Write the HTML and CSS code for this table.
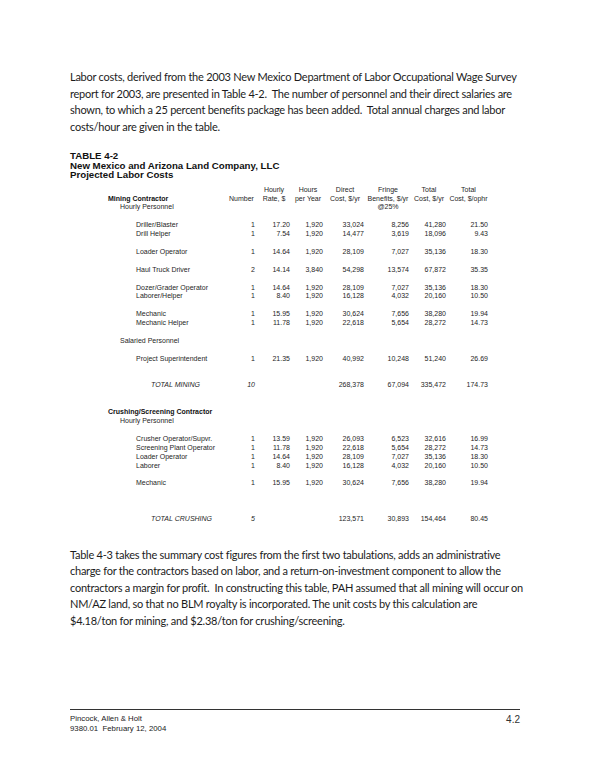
FILE: index.html
```html
<!DOCTYPE html>
<html lang="en">
<head>
    <meta charset="UTF-8">
    <meta name="viewport" content="width=device-width, initial-scale=1.0">
    <title>Projected Labor Costs</title>
    <link rel="stylesheet" href="styles.css">
</head>
<body>

    <div class="page">
        <p class="text">
            Labor costs, derived from the 2003 New Mexico Department of Labor Occupational Wage Survey<br>
            report for 2003, are presented in Table 4-2.&nbsp; The number of personnel and their direct salaries are<br>
            shown, to which a 25 percent benefits package has been added.&nbsp; Total annual charges and labor<br>
            costs/hour are given in the table.
        </p>

        <div class="table-title">
            TABLE 4-2<br>
            New Mexico and Arizona Land Company, LLC<br>
            Projected Labor Costs
        </div>

        <table class="labor">
            <colgroup>
                <col class="c-name">
                <col class="c-num">
                <col class="c-rate">
                <col class="c-hours">
                <col class="c-direct">
                <col class="c-fringe">
                <col class="c-total">
                <col class="c-ophr">
            </colgroup>
            <thead>
                <tr>
                    <th></th><th></th>
                    <th>Hourly</th><th>Hours</th><th>Direct</th><th>Fringe</th><th>Total</th><th>Total</th>
                </tr>
                <tr>
                    <th class="group">Mining Contractor</th>
                    <th>Number</th><th>Rate, $</th><th>per Year</th><th>Cost, $/yr</th><th>Benefits, $/yr</th><th>Cost, $/yr</th><th>Cost, $/ophr</th>
                </tr>
                <tr>
                    <th class="sub">Hourly Personnel</th>
                    <th></th><th></th><th></th><th></th><th>@25%</th><th></th><th></th>
                </tr>
            </thead>
            <tbody>
                <tr class="gap"><td colspan="8"></td></tr>
                <tr><td class="job">Driller/Blaster</td><td>1</td><td>17.20</td><td>1,920</td><td>33,024</td><td>8,256</td><td>41,280</td><td>21.50</td></tr>
                <tr><td class="job">Drill Helper</td><td>1</td><td>7.54</td><td>1,920</td><td>14,477</td><td>3,619</td><td>18,096</td><td>9.43</td></tr>
                <tr class="gap"><td colspan="8"></td></tr>
                <tr><td class="job">Loader Operator</td><td>1</td><td>14.64</td><td>1,920</td><td>28,109</td><td>7,027</td><td>35,136</td><td>18.30</td></tr>
                <tr class="gap"><td colspan="8"></td></tr>
                <tr><td class="job">Haul Truck Driver</td><td>2</td><td>14.14</td><td>3,840</td><td>54,298</td><td>13,574</td><td>67,872</td><td>35.35</td></tr>
                <tr class="gap"><td colspan="8"></td></tr>
                <tr><td class="job">Dozer/Grader Operator</td><td>1</td><td>14.64</td><td>1,920</td><td>28,109</td><td>7,027</td><td>35,136</td><td>18.30</td></tr>
                <tr><td class="job">Laborer/Helper</td><td>1</td><td>8.40</td><td>1,920</td><td>16,128</td><td>4,032</td><td>20,160</td><td>10.50</td></tr>
                <tr class="gap"><td colspan="8"></td></tr>
                <tr><td class="job">Mechanic</td><td>1</td><td>15.95</td><td>1,920</td><td>30,624</td><td>7,656</td><td>38,280</td><td>19.94</td></tr>
                <tr><td class="job">Mechanic Helper</td><td>1</td><td>11.78</td><td>1,920</td><td>22,618</td><td>5,654</td><td>28,272</td><td>14.73</td></tr>
                <tr class="gap"><td colspan="8"></td></tr>
                <tr><td class="sub" colspan="8">Salaried Personnel</td></tr>
                <tr class="gap"><td colspan="8"></td></tr>
                <tr><td class="job">Project Superintendent</td><td>1</td><td>21.35</td><td>1,920</td><td>40,992</td><td>10,248</td><td>51,240</td><td>26.69</td></tr>
                <tr class="gap"><td colspan="8"></td></tr>
                <tr class="gap"><td colspan="8"></td></tr>
                <tr class="total"><td class="job-total">TOTAL MINING</td><td class="count">10</td><td></td><td></td><td>268,378</td><td>67,094</td><td>335,472</td><td>174.73</td></tr>
                <tr class="gap"><td colspan="8"></td></tr>
                <tr class="gap"><td colspan="8"></td></tr>

                <tr><td class="group" colspan="8">Crushing/Screening Contractor</td></tr>
                <tr><td class="sub" colspan="8">Hourly Personnel</td></tr>
                <tr class="gap"><td colspan="8"></td></tr>
                <tr><td class="job">Crusher Operator/Supvr.</td><td>1</td><td>13.59</td><td>1,920</td><td>26,093</td><td>6,523</td><td>32,616</td><td>16.99</td></tr>
                <tr><td class="job">Screening Plant Operator</td><td>1</td><td>11.78</td><td>1,920</td><td>22,618</td><td>5,654</td><td>28,272</td><td>14.73</td></tr>
                <tr><td class="job">Loader Operator</td><td>1</td><td>14.64</td><td>1,920</td><td>28,109</td><td>7,027</td><td>35,136</td><td>18.30</td></tr>
                <tr><td class="job">Laborer</td><td>1</td><td>8.40</td><td>1,920</td><td>16,128</td><td>4,032</td><td>20,160</td><td>10.50</td></tr>
                <tr class="gap"><td colspan="8"></td></tr>
                <tr><td class="job">Mechanic</td><td>1</td><td>15.95</td><td>1,920</td><td>30,624</td><td>7,656</td><td>38,280</td><td>19.94</td></tr>
                <tr class="gap"><td colspan="8"></td></tr>
                <tr class="gap"><td colspan="8"></td></tr>
                <tr class="gap"><td colspan="8"></td></tr>
                <tr class="total"><td class="job-total">TOTAL CRUSHING</td><td class="count">5</td><td></td><td></td><td>123,571</td><td>30,893</td><td>154,464</td><td>80.45</td></tr>
            </tbody>
        </table>

        <p class="text text-after">
            Table 4-3 takes the summary cost figures from the first two tabulations, adds an administrative<br>
            charge for the contractors based on labor, and a return-on-investment component to allow the<br>
            contractors a margin for profit.&nbsp; In constructing this table, PAH assumed that all mining will occur on<br>
            NM/AZ land, so that no BLM royalty is incorporated. The unit costs by this calculation are<br>
            $4.18/ton for mining, and $2.38/ton for crushing/screening.
        </p>

        <div class="page-foot">
            <div class="foot-left">
                Pincock, Allen &amp; Holt<br>
                9380.01&nbsp; February 12, 2004
            </div>
            <div class="foot-page">4.2</div>
        </div>
    </div>

</body>
</html>
```

FILE: styles.css
```css
body {
    margin: 0;
    background-color: white;
    color: #1c1c1c;
}
.page {
    width: 594px;
    height: 769px;
    padding: 69px 0 0 70px;
    box-sizing: border-box;
}
.text {
    font-family: Lato, "Open Sans", sans-serif;
    font-size: 11px;
    letter-spacing: -0.25px;
    line-height: 16.5px;
    margin: 0;
    white-space: nowrap;
}
.text-after {
    margin-top: 23px;
}
.table-title {
    font-family: "Liberation Sans", Arial, sans-serif;
    font-weight: bold;
    font-size: 9.7px;
    line-height: 9.7px;
    margin-top: 16px;
    color: #111;
}
.labor {
    font-family: "Liberation Sans", Arial, sans-serif;
    font-size: 7px;
    line-height: 8.9px;
    color: #262626;
    border-collapse: collapse;
    table-layout: fixed;
    width: 380px;
    margin: 5.5px 0 0 38px;
}
.c-name { width: 117px; }
.c-num { width: 30px; }
.c-rate { width: 35px; }
.c-hours { width: 33px; }
.c-direct { width: 41px; }
.c-fringe { width: 45px; }
.c-total { width: 37px; }
.c-ophr { width: 42px; }
.labor th, .labor td {
    padding: 0;
    white-space: nowrap;
    vertical-align: top;
}
.labor th {
    font-weight: normal;
    text-align: center;
    padding-left: 3px;
}
.labor td {
    text-align: right;
}
.labor .group {
    font-weight: bold;
    text-align: left;
    padding-left: 0;
    color: #111;
}
.labor .sub {
    text-align: left;
    padding-left: 12px;
}
.labor .job {
    text-align: left;
    padding-left: 28px;
}
.labor .job-total {
    text-align: left;
    padding-left: 43px;
    font-style: italic;
}
.labor .count {
    font-style: italic;
}
.labor .gap td {
    height: 8.9px;
}
.page-foot {
    width: 450px;
    margin-top: 80px;
    border-top: 1px solid #333;
    padding-top: 4px;
    display: flex;
    justify-content: space-between;
    font-family: "Liberation Sans", Arial, sans-serif;
    color: #222;
}
.foot-left {
    font-size: 7.8px;
    line-height: 10px;
}
.foot-page {
    font-size: 10px;
    line-height: 10px;
    padding-top: 1px;
    color: #333;
}
```
